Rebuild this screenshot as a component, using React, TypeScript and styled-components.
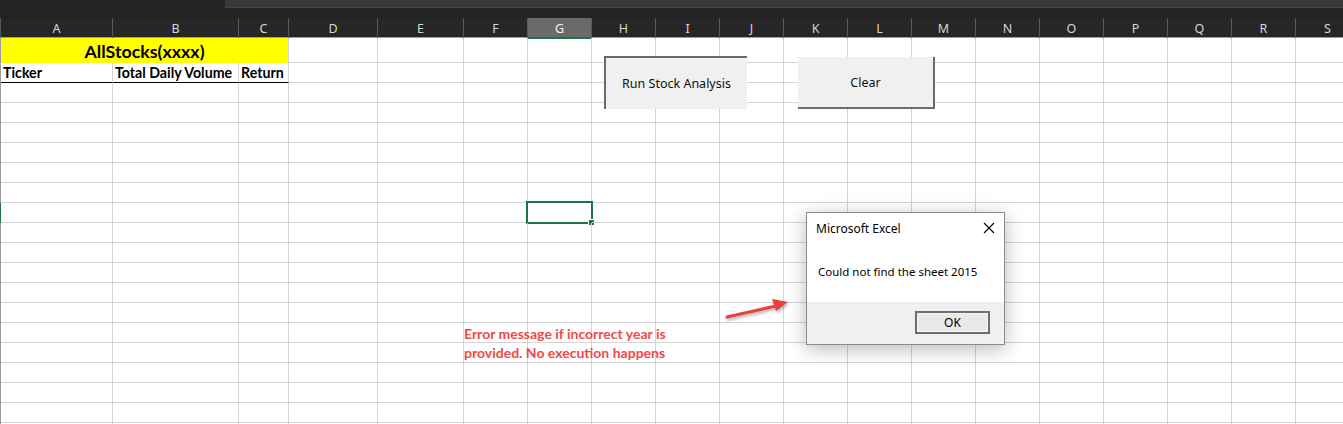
import React from "react";
import styled, { createGlobalStyle } from "styled-components";

const GlobalStyle = createGlobalStyle`
  html, body { margin: 0; padding: 0; background: #ffffff; overflow: hidden; }
  * { box-sizing: border-box; }
`;

const GRID = "112px 126px 50px 89px 86px repeat(13, 64px) 64px";
const COLS = ["A","B","C","D","E","F","G","H","I","J","K","L","M","N","O","P","Q","R","S"];
const SELECTED_COL = "G";
const SELECTED_ROW = 9;
const ROW_COUNT = 21;

const Wrapper = styled.div`
  position: relative;
  width: 1343px;
  height: 424px;
  overflow: hidden;
  background: #ffffff;
`;

const TopBar = styled.div`
  display: flex;
  height: 18px;
  background: #232323;
`;

const RibbonStrip = styled.div`
  margin-left: 225px;
  flex: 1;
  height: 8px;
  background: #383838;
  border-bottom: 1px solid #444444;
`;

const HeaderRow = styled.div`
  display: grid;
  grid-template-columns: ${GRID};
  background: #262626;
  border-left: 1px solid #555555;
  border-bottom: 1px solid #9d9d9d;
  box-sizing: content-box;
  height: 19px;
`;

const HeaderCell = styled.div<{ $active?: boolean }>`
  display: flex;
  align-items: center;
  justify-content: center;
  border-right: 1px solid #5a5a5a;
  background: ${(p) => (p.$active ? "#6a6a6a" : "transparent")};
  border-bottom: ${(p) => (p.$active ? "2px solid #217346" : "none")};
  color: ${(p) => (p.$active ? "#f2f2f2" : "#d6d6d6")};
  font-family: "Noto Sans", "Open Sans", sans-serif;
  font-size: 12.5px;
  padding-top: ${(p) => (p.$active ? "2px" : "0")};
`;

const Row = styled.div<{ $height: number; $selected?: boolean }>`
  display: grid;
  grid-template-columns: ${GRID};
  height: ${(p) => p.$height}px;
  border-left: 1px solid ${(p) => (p.$selected ? "#217346" : "#9a9a9a")};
`;

const Cell = styled.div<{ $rule?: boolean }>`
  position: relative;
  border-right: 1px solid #d4d4d4;
  border-bottom: 1px solid ${(p) => (p.$rule ? "#000000" : "#d4d4d4")};
  font-family: "Lato", "Liberation Sans", sans-serif;
  font-weight: 700;
  font-size: 14.2px;
  color: #000000;
  padding: 0 2px;
  display: flex;
  align-items: flex-end;
  padding-bottom: 1px;
  white-space: nowrap;
  overflow: visible;
`;

const TitleCell = styled.div`
  grid-column: span 3;
  background: #ffff00;
  border-right: 1px solid #d4d4d4;
  display: flex;
  align-items: center;
  justify-content: center;
  font-family: "Lato", "Liberation Sans", sans-serif;
  font-weight: 700;
  font-size: 17.8px;
  color: #000000;
  padding-top: 1px;
`;

const Selection = styled.div`
  position: absolute;
  left: -2px;
  top: -2px;
  width: 67px;
  height: 23px;
  border: 2px solid #217346;
  pointer-events: none;
`;

const FillHandle = styled.span`
  position: absolute;
  right: -4px;
  bottom: -4px;
  width: 7px;
  height: 7px;
  background: #217346;
  border: 1px solid #ffffff;
`;

const FormButton = styled.div<{ $pressed?: boolean }>`
  position: absolute;
  display: flex;
  align-items: center;
  justify-content: center;
  background: #f0f0f0;
  font-family: "Noto Sans", "Open Sans", sans-serif;
  font-size: 12.5px;
  color: #111111;
  border-style: solid;
  border-color: #6b6b6b;
  border-width: ${(p) => (p.$pressed ? "2px 0 0 2px" : "0 2px 2px 0")};
`;

const Dialog = styled.div`
  position: absolute;
  left: 806px;
  top: 212px;
  width: 199px;
  height: 133px;
  background: #ffffff;
  border: 1px solid #8c8c8c;
  box-shadow: 0 4px 18px rgba(0, 0, 0, 0.28);
  display: flex;
  flex-direction: column;
  font-family: "Noto Sans", "Open Sans", sans-serif;
  font-size: 11.5px;
  color: #000000;
`;

const DialogTitle = styled.div`
  height: 30px;
  display: flex;
  align-items: center;
  justify-content: space-between;
  padding: 0 9px 0 9px;
  font-size: 12px;
`;

const DialogBody = styled.div`
  flex: 1;
  display: flex;
  align-items: center;
  padding-left: 11px;
  padding-bottom: 2px;
`;

const DialogFooter = styled.div`
  height: 42px;
  background: #f0f0f0;
  display: flex;
  align-items: center;
  justify-content: flex-end;
  padding-right: 14px;
  padding-bottom: 1px;
`;

const OkButton = styled.div`
  width: 75px;
  height: 23px;
  border: 2px solid #6e6e6e;
  background: #e9e9e9;
  display: flex;
  align-items: center;
  justify-content: center;
  font-size: 12px;
  box-shadow: inset 0 0 0 1px #f5f5f5;
`;

const Note = styled.div`
  position: absolute;
  left: 464px;
  top: 324px;
  font-family: "Lato", "Liberation Sans", sans-serif;
  font-weight: 700;
  font-size: 14px;
  line-height: 19px;
  color: #f04848;
  white-space: nowrap;
`;

const ArrowSvg = styled.svg`
  position: absolute;
  left: 718px;
  top: 292px;
  overflow: visible;
`;

function CloseIcon() {
  return (
    <svg width="12" height="12" viewBox="0 0 12 12">
      <path d="M1 1 L11 11 M11 1 L1 11" stroke="#000" strokeWidth="1.1" fill="none" />
    </svg>
  );
}

function Arrow() {
  return (
    <ArrowSvg width="80" height="36" viewBox="0 0 80 36">
      <defs>
        <filter id="arrowShadow" x="-20%" y="-50%" width="140%" height="200%">
          <feDropShadow dx="1" dy="2" stdDeviation="1.5" floodColor="#000" floodOpacity="0.3" />
        </filter>
      </defs>
      <g filter="url(#arrowShadow)">
        <path d="M9 25 L58 14" stroke="#e8403a" strokeWidth="3.2" strokeLinecap="round" fill="none" />
        <path d="M70 10 L54 7 L58 19 Z" fill="#e8403a" />
      </g>
    </ArrowSvg>
  );
}

function rowHeight(r: number) {
  return r === 1 ? 25 : 20;
}

function renderRow(r: number) {
  if (r === 1) {
    return (
      <Row key={r} $height={rowHeight(r)}>
        <TitleCell>AllStocks(xxxx)</TitleCell>
        {COLS.slice(3).map((c) => (
          <Cell key={c} />
        ))}
      </Row>
    );
  }
  if (r === 2) {
    const labels: Record<string, string> = { A: "Ticker", B: "Total Daily Volume", C: "Return" };
    return (
      <Row key={r} $height={rowHeight(r)}>
        {COLS.map((c) => (
          <Cell key={c} $rule={!!labels[c]}>
            {labels[c] ?? ""}
          </Cell>
        ))}
      </Row>
    );
  }
  return (
    <Row key={r} $height={rowHeight(r)} $selected={r === SELECTED_ROW}>
      {COLS.map((c) => (
        <Cell key={c}>
          {r === SELECTED_ROW && c === SELECTED_COL && (
            <Selection>
              <FillHandle />
            </Selection>
          )}
        </Cell>
      ))}
    </Row>
  );
}

export default function App() {
  const rows = Array.from({ length: ROW_COUNT }, (_, i) => i + 1);
  return (
    <>
      <GlobalStyle />
      <Wrapper>
        <TopBar>
          <RibbonStrip />
        </TopBar>
        <HeaderRow>
          {COLS.map((c) => (
            <HeaderCell key={c} $active={c === SELECTED_COL}>
              {c}
            </HeaderCell>
          ))}
        </HeaderRow>
        {rows.map(renderRow)}

        <FormButton $pressed style={{ left: 604, top: 56, width: 143, height: 53 }}>
          Run Stock Analysis
        </FormButton>
        <FormButton style={{ left: 798, top: 57, width: 137, height: 52 }}>Clear</FormButton>

        <Note>
          Error message if incorrect year is
          <br />
          provided. No execution happens
        </Note>
        <Arrow />

        <Dialog>
          <DialogTitle>
            <span>Microsoft Excel</span>
            <CloseIcon />
          </DialogTitle>
          <DialogBody>Could not find the sheet 2015</DialogBody>
          <DialogFooter>
            <OkButton>OK</OkButton>
          </DialogFooter>
        </Dialog>
      </Wrapper>
    </>
  );
}
